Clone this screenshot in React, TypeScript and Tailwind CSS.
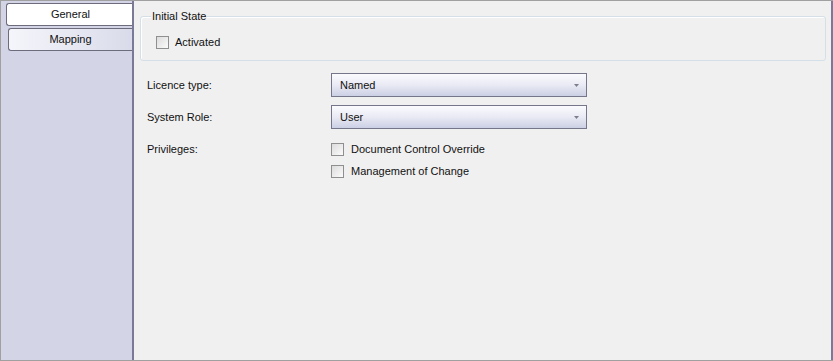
import React from "react";

const Check = () => (
  <span className="inline-block w-[13px] h-[13px] border border-[#8f8f8f] bg-gradient-to-br from-[#dcdcdc] to-[#fbfbfb] shrink-0" />
);

const Select = ({ value }: { value: string }) => (
  <div className="w-[256px] h-[24px] border border-[#76768a] bg-gradient-to-b from-[#fbfbfe] via-[#e9eaf4] to-[#ccd0e4] flex items-center justify-between pl-[8px] pr-[7px]">
    <span>{value}</span>
    <svg width="5" height="3" viewBox="0 0 5 3">
      <path d="M0 0h5L2.5 3z" fill="#7c7e8e" />
    </svg>
  </div>
);

export default function App() {
  return (
    <div
      className="w-[833px] h-[361px] flex border-l border-t border-b border-[#a0a0a0] text-[11px] text-[#111]"
      style={{ fontFamily: '"Liberation Sans", Arial, sans-serif' }}
    >
      <div className="w-[131px] bg-[#d3d5e7] pt-[2px] flex flex-col gap-[2px]">
        <div className="ml-[5px] h-[23px] bg-white border border-r-0 border-[#6c6c7c] rounded-l-[3px] flex items-center justify-center pl-[2px]">
          General
        </div>
        <div className="ml-[7px] h-[23px] bg-gradient-to-r from-[#f5f6fb] to-[#d9dbea] border border-r-0 border-[#6c6c7c] rounded-l-[3px] flex items-center justify-center">
          Mapping
        </div>
      </div>
      <div className="w-[2px] bg-[#7a7a98]" />
      <div className="flex-1 bg-[#f0f0f0] border-r-2 border-[#7a7a98] pl-[6px] pr-[5px] pt-[15px]">
        <div className="relative border border-[#d5dfe8] rounded-[3px] h-[45px] shadow-[inset_1px_1px_0_#fff]">
          <span className="absolute -top-[8px] left-[10px] px-[1px] bg-[#f0f0f0] leading-[14px]">Initial State</span>
          <div className="flex items-center gap-[6px] pl-[15px] pt-[19px] h-[32px]">
            <Check />
            <span>Activated</span>
          </div>
        </div>
        <div className="mt-[12px] pl-[7px] flex flex-col">
          <div className="flex items-center h-[24px]">
            <span className="w-[184px]">Licence type:</span>
            <Select value="Named" />
          </div>
          <div className="flex items-center h-[24px] mt-[8px]">
            <span className="w-[184px]">System Role:</span>
            <Select value="User" />
          </div>
          <div className="flex mt-[14px]">
            <span className="w-[184px] leading-[13px] pt-[-1px]">Privileges:</span>
            <div className="flex flex-col gap-[9px]">
              <div className="flex items-center gap-[7px] h-[13px]">
                <Check />
                <span>Document Control Override</span>
              </div>
              <div className="flex items-center gap-[7px] h-[13px]">
                <Check />
                <span>Management of Change</span>
              </div>
            </div>
          </div>
        </div>
      </div>
    </div>
  );
}
